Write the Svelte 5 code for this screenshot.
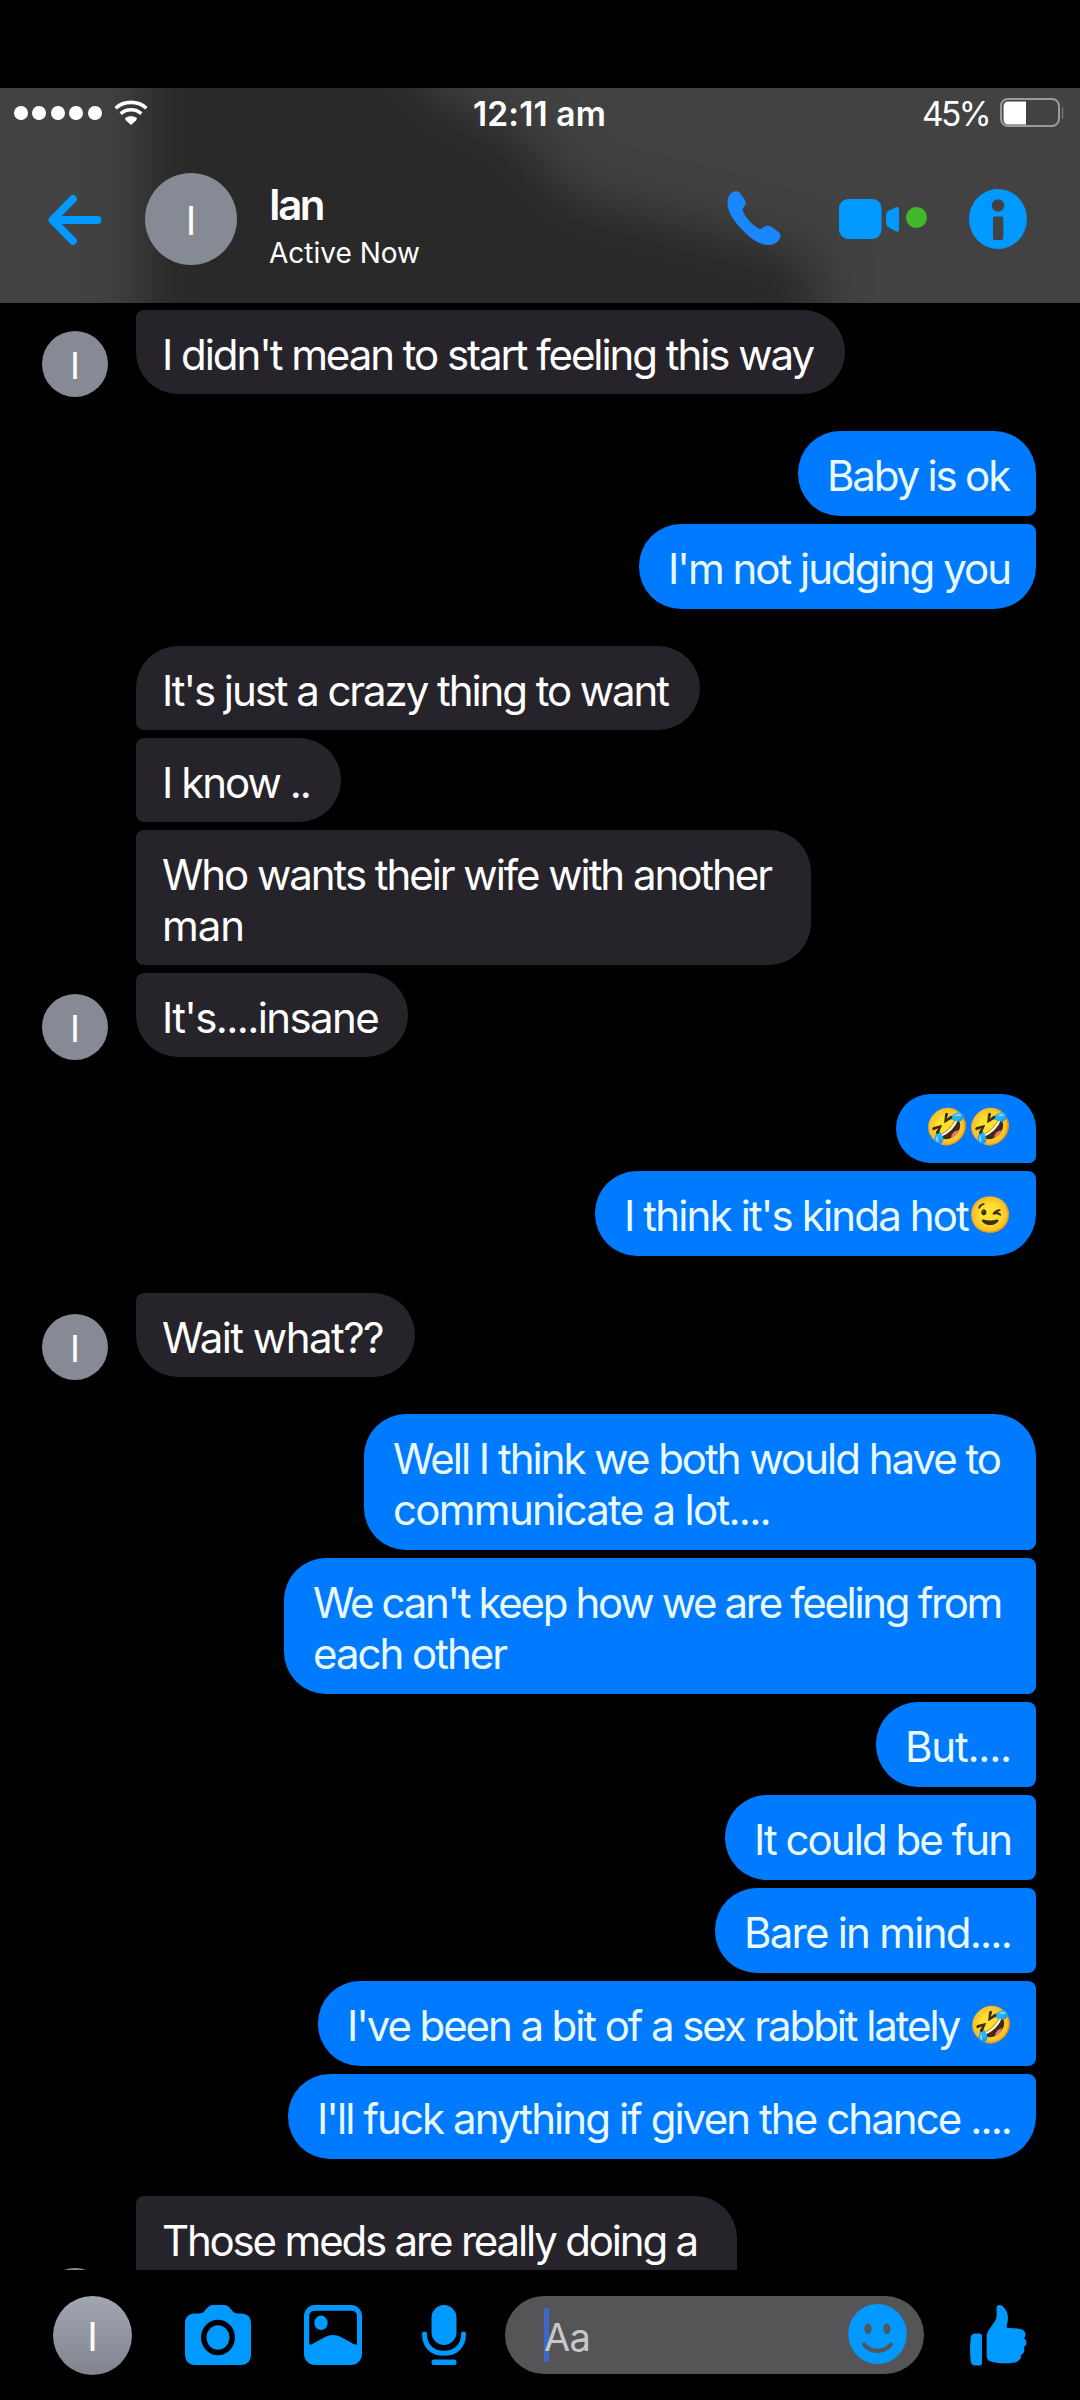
<script>
	// Message groups, oldest first. `w` is the bubble width; every line carries its own run width.
	const groups = [
		{
			from: 'ian',
			tail: true,
			messages: [{ w: 709, lines: [["I didn't mean to start feeling this way", 651]] }]
		},
		{
			from: 'me',
			messages: [
				{ w: 238, lines: [['Baby is ok', 182]] },
				{ w: 397, lines: [["I'm not judging you", 342]] }
			]
		},
		{
			from: 'ian',
			messages: [
				{ w: 564, lines: [["It's just a crazy thing to want", 506]] },
				{ w: 205, lines: [['I know ..', 148]] },
				{
					w: 675,
					lines: [
						['Who wants their wife with another', 609],
						['man', 82]
					]
				},
				{ w: 272, lines: [["It's....insane", 216]] }
			]
		},
		{
			from: 'me',
			messages: [
				{ w: 140, compact: true, lines: [['', 0, '🤣🤣']] },
				{ w: 441, lines: [["I think it's kinda hot", 344, '😉']] }
			]
		},
		{
			from: 'ian',
			tail: true,
			messages: [{ w: 279, lines: [['Wait what??', 221]] }]
		},
		{
			from: 'me',
			messages: [
				{
					w: 672,
					lines: [
						['Well I think we both would have to', 607],
						['communicate a lot....', 377]
					]
				},
				{
					w: 752,
					lines: [
						["We can't keep how we are feeling from", 688],
						['each other', 193]
					]
				},
				{ w: 160, lines: [['But....', 106]] },
				{ w: 311, lines: [['It could be fun', 257]] },
				{ w: 321, lines: [['Bare in mind....', 267]] },
				{ w: 718, lines: [["I've been a bit of a sex rabbit lately ", 622, '🤣']] },
				{ w: 748, lines: [["I'll fuck anything if given the chance ....", 694]] }
			]
		},
		{
			from: 'ian',
			tail: true,
			hidden: true,
			messages: [{ w: 601, lines: [['Those meds are really doing a', 535], ['', 0]] }]
		}
	];

	// Tighten or loosen the tracking so that a run fills its width
	function fit(node, width) {
		const count = [...node.textContent].length;
		if (!count) return;
		const natural = node.getBoundingClientRect().width;
		node.style.letterSpacing = `${(width - natural) / count}px`;
	}
</script>

<div class="phone">
	<header>
		<div class="haze"><i></i></div>

		<div class="status">
			<div class="signal">
				{#each [0, 1, 2, 3, 4] as dot (dot)}<i></i>{/each}
				<svg class="wifi" width="34" height="26" viewBox="0 0 34 26">
					<g fill="none" stroke="#fff" stroke-width="3.6">
						<path d="M1.6 8.2C10 .4 24 .4 32.4 8.2" />
						<path d="M6.7 13.6c6-5.2 14.6-5.2 20.6 0" />
					</g>
					<path d="M11 18.3c3.6-2.6 8.400-2.600 12 0l-1 2.200-5 4.500-5-4.500z" fill="#fff" />
				</svg>
			</div>
			<span class="time" use:fit={133}>12:11 am</span>
			<div class="power">
				<span use:fit={67}>45%</span>
				<svg width="65" height="30" viewBox="0 0 65 30">
					<rect x="1" y="1" width="58" height="27" rx="7" fill="none" stroke="#9b9b9b" stroke-width="2" />
					<path d="M9 3.5h17v23H9c-4 0-5.500-2-5.500-5.500V9C3.500 5.500 5 3.500 9 3.500z" fill="#fff" />
					<path d="M62.5 9.5v11" stroke="#777" stroke-width="1.5" />
				</svg>
			</div>
		</div>

		<div class="contact">
			<svg class="back" width="54" height="52" viewBox="0 0 54 52">
				<path
					d="M25 5 4.5 26 25 47M5 26h44.5"
					fill="none"
					stroke="#0099ff"
					stroke-width="7.8"
					stroke-linecap="round"
					stroke-linejoin="round"
				/>
			</svg>
			<div class="avatar large">I</div>
			<div class="who">
				<strong use:fit={54}>Ian</strong>
				<span use:fit={151}>Active Now</span>
			</div>
			<svg class="call" width="54" height="54" viewBox="0 0 54 54" fill="#1a87ff">
				<path
					d="M5 1.5C7.500-.5 11-.3 13 2l4.500 6.500c1.700 2.600 1.500 5-.5 7.200-1.800 2-1.800 3.800-.4 6.300 3.300 6 8.200 11.300 14.400 15.200 2 1.200 3.500 1 5.200-.6 2.600-2.400 5.300-2.600 8.300-.6l6.500 4.500c2.800 2 3.200 4.500 1.500 7.500-2.300 4-6 6-11 6-7.500 0-15.500-4.500-24-13C7 31 .5 21 .5 12 .5 7.500 1.800 4 5 1.500z"
				/>
			</svg>
			<svg class="video" width="62" height="42" viewBox="0 0 62 42" fill="#0099ff">
				<rect y="1" width="42.5" height="40" rx="9" />
				<path d="M47 17.500c0-2.500 1-4 3-5l6-3c2.500-1.200 4-.5 4 1.500v20.500c0 2-1.500 2.700-4 1.500l-6-3.500c-2-1-3-2.500-3-5z" />
			</svg>
			<i class="online"></i>
			<svg class="info" width="58" height="60" viewBox="0 0 58 60">
				<ellipse cx="29" cy="30" rx="29" ry="30" fill="#0099ff" />
				<circle cx="29" cy="16.500" r="6.200" fill="#424242" />
				<rect x="24" y="27.500" width="10.300" height="23.500" rx="2" fill="#424242" />
			</svg>
		</div>
	</header>

	<main>
		{#each groups as group, g (g)}
			<section class={group.from} class:tail={group.tail}>
				{#each group.messages as msg, m (m)}
					<div class="row">
						{#if group.from === 'ian' && m === group.messages.length - 1}
							<div class="avatar small">{group.hidden ? '' : 'I'}</div>
						{/if}
						<div class="bubble" class:compact={msg.compact} style:width="{msg.w}px">
							{#each msg.lines as [text, width, emoji], l (l)}
								<p>
									{#if text}<span use:fit={width}>{text}</span>{/if}{#each [...(emoji ?? '')] as e, n (n)}<i
											class="emoji">{e}</i
										>{/each}
								</p>
							{/each}
						</div>
					</div>
				{/each}
			</section>
		{/each}
	</main>

	<footer>
		<div class="avatar medium">I</div>
		<svg class="camera" width="66" height="60" viewBox="0 0 66 60">
			<path
				d="M10 8.500h4c3 0 4.500-1 6-3C22.500 2 24.500 0 29 0h9c4.500 0 6.500 2 9 5.500 1.500 2 3 3 6 3h3c6.500 0 10 3.500 10 10v30c0 7.500-3.500 11.500-10 11.500H10C3.500 60 0 56 0 48.500v-30c0-6.500 3.500-10 10-10z"
				fill="#0099ff"
			/>
			<ellipse cx="33" cy="32.500" rx="14.200" ry="15" fill="none" stroke="#000" stroke-width="5.500" />
		</svg>
		<svg class="photo" width="58" height="60" viewBox="0 0 58 60">
			<rect width="58" height="60" rx="11" fill="#0099ff" />
			<path d="M11 5.800h36.500q5.500 0 5.500 5.700v28h-2.500L37 32q-8-4-16 0L7.500 39.500H5.200v-28Q5.200 5.800 11 5.800z" fill="#000" />
			<ellipse cx="17" cy="17.800" rx="6.700" ry="7.200" fill="#0099ff" />
		</svg>
		<svg class="mic" width="44" height="60" viewBox="0 0 44 60">
			<rect x="9.500" width="25" height="40" rx="12.500" fill="#0099ff" />
			<path
				d="M2.500 29c0 12.500 8 19.300 19.500 19.300S41.500 41.500 41.500 29"
				fill="none"
				stroke="#0099ff"
				stroke-width="5"
				stroke-linecap="round"
			/>
			<rect x="9.500" y="54.500" width="25" height="5.500" rx="2.500" fill="#0099ff" />
		</svg>
		<div class="field">
			<i class="caret"></i>
			<span use:fit={46}>Aa</span>
			<svg width="59" height="60" viewBox="0 0 59 60">
				<ellipse cx="29.500" cy="30" rx="29.300" ry="30" fill="#0099ff" />
				<ellipse cx="20" cy="24.800" rx="3.600" ry="5.200" fill="#555557" />
				<ellipse cx="39" cy="24.800" rx="3.600" ry="5.200" fill="#555557" />
				<path
					d="M16 40.500c7 8.500 20 8.500 27 0"
					fill="none"
					stroke="#555557"
					stroke-width="4.200"
					stroke-linecap="round"
				/>
			</svg>
		</div>
		<svg class="like" width="57" height="61" viewBox="0 0 57 61" fill="#0099ff">
			<path d="M5 28.500h4.500q2.500 0 2.500 3v26q0 3-2.500 3H5q-3.500 0-4.200-4-1.500-12 0-24Q1.300 28.500 5 28.500z" />
			<path
				d="M26.500 3c0-3.500 4-3.800 7-1 4.500 4.500 5.500 10.500 3.500 17.500-.7 2.800-.5 3.500 2.500 3.500C47 23 55.500 24 55.500 29c0 2-.7 3-1.500 4 3 2 3.500 6.500 0 9 1 3.500.3 6.300-3 8 .5 5-3.500 7.500-9 8-8.500.8-17.500 0-22.500-2-2-1-2.800-3-2.800-5.500V32c0-3 .8-5.500 2.800-8l5.500-8C27.500 12.500 26.500 8 26.500 3z"
			/>
		</svg>
	</footer>
</div>

<style>
	:global(body) {
		margin: 0;
		background: #000;
	}

	.phone {
		display: flex;
		flex-direction: column;
		box-sizing: border-box;
		width: 1080px;
		height: 2400px;
		padding-top: 88px;
		overflow: hidden;
		background: #000;
		color: #fff;
		font-family: Inter, 'Liberation Sans', sans-serif;
	}

	svg {
		display: block;
		flex: none;
	}

	header {
		position: relative;
		flex: none;
		height: 215px;
		overflow: hidden;
		background: #424242;
	}

	/* Blurred shadow of the chat that has scrolled under the bar */
	.haze {
		position: absolute;
		inset: -100px 0;
		filter: blur(25px);
	}

	.haze i {
		display: block;
		height: 100%;
		background: #292929;
		clip-path: polygon(
			142px 0,
			370px 0,
			430px 100px,
			530px 150px,
			570px 205px,
			700px 238px,
			815px 270px,
			822px 100%,
			142px 100%
		);
	}

	.status {
		position: relative;
		display: grid;
		grid-template-columns: 1fr auto 1fr;
		align-items: center;
		height: 50px;
		padding: 0 15px 0 14px;
		font-size: 33.5px;
	}

	.status span {
		padding-top: 2px;
	}

	.signal,
	.power {
		display: flex;
		align-items: center;
	}

	.signal {
		gap: 4.4px;
	}

	.signal i {
		width: 14px;
		height: 14.5px;
		border-radius: 50%;
		background: #fff;
	}

	.wifi {
		margin-left: 8px;
	}

	.time {
		font-weight: 600;
	}

	.power {
		justify-content: flex-end;
		gap: 11px;
	}

	.contact {
		position: relative;
		display: flex;
		align-items: center;
		height: 165px;
		padding-left: 48px;
	}

	.avatar {
		display: flex;
		flex: none;
		align-items: center;
		justify-content: center;
		border-radius: 50%;
		background: #868a94;
		font-weight: 400;
	}

	.large {
		box-sizing: border-box;
		width: 92px;
		height: 92px;
		margin: -4px 0 0 43px;
		padding-top: 3px;
		font-size: 39px;
	}

	.back {
		margin-bottom: 1px;
	}

	.who {
		display: flex;
		flex-direction: column;
		gap: 4px;
		align-items: flex-start;
		width: 458px;
		margin: 10px 0 0 32px;
		white-space: nowrap;
	}

	.who strong {
		font-size: 42px;
		font-weight: 600;
		line-height: 51px;
	}

	.who span {
		font-size: 28px;
		line-height: 38px;
	}

	.call {
		margin-top: -5px;
	}

	.video {
		margin: -4px 0 0 58px;
	}

	.online {
		width: 20.5px;
		height: 20.5px;
		margin: -6px 42px 0 5px;
		border-radius: 50%;
		background: #42b72a;
	}

	.info {
		margin-top: -4px;
	}

	main {
		display: flex;
		flex: none;
		flex-direction: column;
		gap: 37px;
		box-sizing: border-box;
		height: 1967px;
		padding: 7px 44px 0 42px;
		overflow: hidden;
	}

	section {
		display: flex;
		flex: none;
		flex-direction: column;
		gap: 8px;
	}

	.row {
		display: flex;
		align-items: flex-end;
	}

	.ian .row {
		padding-left: 94px;
	}

	.me .row {
		justify-content: flex-end;
	}

	.small {
		box-sizing: border-box;
		width: 66px;
		height: 66px;
		margin: 0 28px -3px -94px;
		padding-top: 3px;
		font-size: 37px;
	}

	.bubble {
		box-sizing: border-box;
		border-radius: 42px;
		font-size: 42px;
		line-height: 51px;
		white-space: pre;
	}

	.ian .bubble {
		padding: 19px 0 14px 26px;
		border-top-left-radius: 8px;
		border-bottom-left-radius: 8px;
		background: #26242a;
	}

	.ian:not(.tail) .row:first-child .bubble {
		border-top-left-radius: 42px;
	}

	.ian .row:last-child .bubble {
		border-bottom-left-radius: 42px;
	}

	.me .bubble {
		padding: 19px 0 15px 29px;
		border-top-right-radius: 8px;
		border-bottom-right-radius: 8px;
		background: #007aff;
		color: #e9faff;
	}

	.me .row:first-child .bubble {
		border-top-right-radius: 42px;
	}

	.me .row:last-child .bubble {
		border-bottom-right-radius: 42px;
	}

	.me .compact {
		padding: 8px 0 10px 29px;
	}

	p {
		display: flex;
		height: 51px;
		margin: 0;
	}

	.emoji {
		width: 43px;
		font-family: 'Noto Color Emoji', 'Apple Color Emoji', sans-serif;
		font-size: 35.5px;
		font-style: normal;
		text-align: center;
	}

	footer {
		display: flex;
		flex: 1;
		align-items: center;
		padding: 0 53px;
	}

	.medium {
		box-sizing: border-box;
		width: 79px;
		height: 79px;
		padding-top: 2px;
		background: linear-gradient(#a2a6b2, #80848f);
		font-size: 39px;
	}

	.camera {
		margin-left: 53px;
	}

	.photo {
		margin-left: 53px;
	}

	.mic {
		margin-left: 60px;
	}

	.field {
		display: flex;
		align-items: center;
		box-sizing: border-box;
		width: 420px;
		height: 78px;
		margin-left: 39px;
		padding: 0 17px 0 39px;
		border-radius: 39px;
		background: #555557;
		color: #c8c8ca;
		font-size: 38px;
	}

	.caret {
		width: 5px;
		height: 54px;
		margin-right: -5px;
		background: #3c69c9;
	}

	.field span {
		padding-top: 4px;
	}

	.field svg {
		margin: -2px 0 0 auto;
	}

	.like {
		margin-left: 46px;
	}
</style>
